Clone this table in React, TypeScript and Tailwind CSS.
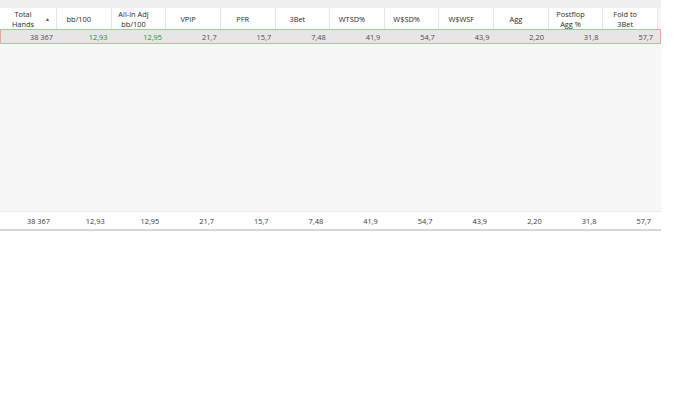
import React from 'react';

const HEADERS: string[][] = [
    ['Total', 'Hands'],
    ['bb/100'],
    ['All-in Adj', 'bb/100'],
    ['VPIP'],
    ['PFR'],
    ['3Bet'],
    ['WTSD%'],
    ['W$SD%'],
    ['W$WSF'],
    ['Agg'],
    ['Postflop', 'Agg %'],
    ['Fold to', '3Bet'],
];

const VALUES = ['38 367', '12,93', '12,95', '21,7', '15,7', '7,48', '41,9', '54,7', '43,9', '2,20', '31,8', '57,7'];
const GREEN = new Set([1, 2]);

const COLS = 'grid grid-cols-[57px_repeat(11,minmax(0,1fr))]';

export default function App() {
    return (
        <div
            className="h-[394px] w-[700px] overflow-hidden bg-white text-[7.4px] leading-[10px]"
            style={{ fontFamily: '"Open Sans", "Noto Sans", sans-serif' }}
        >
            <div className="flex h-[211px] w-[661px] flex-col bg-[#f7f7f7]">
                <div className="h-[8px] bg-[#f0f0f0]" />

                {/* header */}
                <div className={`${COLS} h-[21px] w-[658px] bg-white text-[#2a2a2a]`}>
                    {HEADERS.map((h, i) => (
                        <div key={i} className="relative flex items-center justify-center border-r border-[#e6e6e6] pr-[10px] pt-[1px] text-center">
                            <div className="flex flex-col">
                                {h.map((line) => (
                                    <span key={line}>{line}</span>
                                ))}
                            </div>
                            {i === 0 && (
                                <span className="absolute right-[6px] top-[9px] text-[5px] leading-[5px] text-[#555]">▲</span>
                            )}
                        </div>
                    ))}
                </div>

                {/* selected row */}
                <div className="w-[661px] border border-[#eaa793] bg-[#e6e6e6]">
                    <div className={`${COLS} h-[13px] w-[657px] items-center`}>
                        {VALUES.map((v, i) => (
                            <div key={i} className={`pr-[5px] text-right ${GREEN.has(i) ? 'font-medium text-[#0f9a0f]' : 'text-[#4a4a4a]'}`}>
                                {v}
                            </div>
                        ))}
                    </div>
                </div>

                <div className="flex-1" />
            </div>

            {/* summary */}
            <div className="w-[661px] border-t border-[#ececec] border-b-2 border-b-[#d6d6d6] bg-white">
                <div className={`${COLS} h-[17px] w-[658px] items-center text-[#3a3a3a]`}>
                    {VALUES.map((v, i) => (
                        <div key={i} className="pr-[7px] text-right">
                            {v}
                        </div>
                    ))}
                </div>
            </div>
        </div>
    );
}
